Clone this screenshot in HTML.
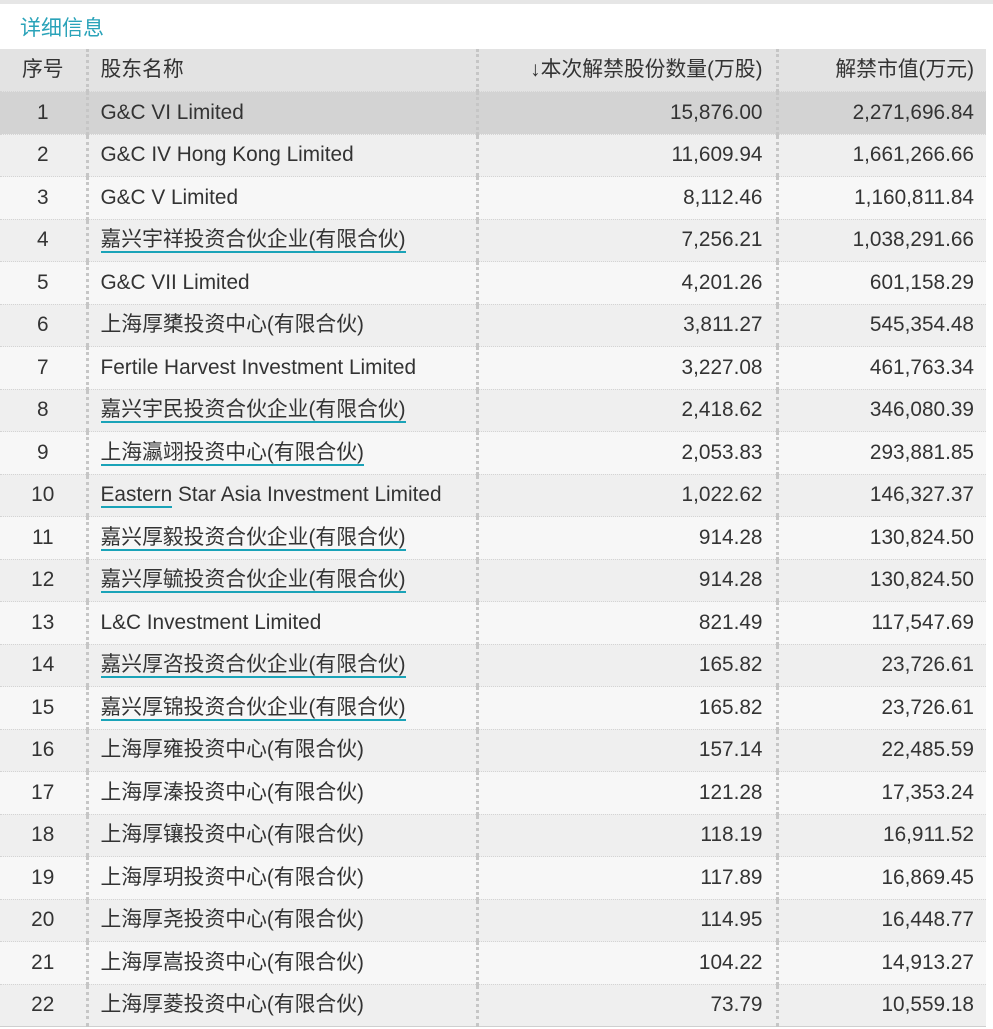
<!DOCTYPE html>
<html><head><meta charset="utf-8"><style>
body{margin:0;width:993px;height:1029px;background:#fff;font-family:"Liberation Sans","Noto Sans CJK SC",sans-serif;color:#333;overflow:hidden;position:relative}
.top{height:4px;background:#e6e6e6}
.title{position:absolute;left:20px;top:15px;font-size:21px;color:#2aa3b9;line-height:28px}
table{position:absolute;left:0;top:49px;width:986px;border-collapse:collapse;font-size:20.8px;table-layout:fixed}
td,th{height:42.5px;padding:0;font-weight:normal;white-space:nowrap;line-height:24px;vertical-align:middle;box-sizing:border-box}
th{background:#e3e3e3}
tr td,tr th{border-bottom:1px dotted #d4d4d4}
tr:last-child td{border-bottom:1px solid #cfcfcf}
.c1{width:87px;text-align:center;border-right:3px dotted #c6c6c6}
.c2{width:390px;text-align:left;padding-left:12px;border-right:3px dotted #c6c6c6}
.c3{width:300px;text-align:right;padding-right:13px;border-right:3px dotted #c6c6c6}
.c4{text-align:right;padding-right:12px}
tbody tr:nth-child(odd) td{background:#f7f7f7}
tbody tr:nth-child(even) td{background:#efefef}
tbody tr.sel td{background:#d3d3d3}
u{text-decoration:none;border-bottom:2px solid #1aa3b8;padding-bottom:0}
</style></head><body>
<div class="top"></div>
<div class="title">详细信息</div>
<table>
<thead><tr><th class="c1">序号</th><th class="c2">股东名称</th><th class="c3">↓本次解禁股份数量(万股)</th><th class="c4">解禁市值(万元)</th></tr></thead>
<tbody>
<tr class="sel"><td class="c1">1</td><td class="c2">G&amp;C VI Limited</td><td class="c3">15,876.00</td><td class="c4">2,271,696.84</td></tr>
<tr><td class="c1">2</td><td class="c2">G&amp;C IV Hong Kong Limited</td><td class="c3">11,609.94</td><td class="c4">1,661,266.66</td></tr>
<tr><td class="c1">3</td><td class="c2">G&amp;C V Limited</td><td class="c3">8,112.46</td><td class="c4">1,160,811.84</td></tr>
<tr><td class="c1">4</td><td class="c2"><u>嘉兴宇祥投资合伙企业(有限合伙)</u></td><td class="c3">7,256.21</td><td class="c4">1,038,291.66</td></tr>
<tr><td class="c1">5</td><td class="c2">G&amp;C VII Limited</td><td class="c3">4,201.26</td><td class="c4">601,158.29</td></tr>
<tr><td class="c1">6</td><td class="c2">上海厚橥投资中心(有限合伙)</td><td class="c3">3,811.27</td><td class="c4">545,354.48</td></tr>
<tr><td class="c1">7</td><td class="c2">Fertile Harvest Investment Limited</td><td class="c3">3,227.08</td><td class="c4">461,763.34</td></tr>
<tr><td class="c1">8</td><td class="c2"><u>嘉兴宇民投资合伙企业(有限合伙)</u></td><td class="c3">2,418.62</td><td class="c4">346,080.39</td></tr>
<tr><td class="c1">9</td><td class="c2"><u>上海瀛翊投资中心(有限合伙)</u></td><td class="c3">2,053.83</td><td class="c4">293,881.85</td></tr>
<tr><td class="c1">10</td><td class="c2"><u>Eastern</u> Star Asia Investment Limited</td><td class="c3">1,022.62</td><td class="c4">146,327.37</td></tr>
<tr><td class="c1">11</td><td class="c2"><u>嘉兴厚毅投资合伙企业(有限合伙)</u></td><td class="c3">914.28</td><td class="c4">130,824.50</td></tr>
<tr><td class="c1">12</td><td class="c2"><u>嘉兴厚毓投资合伙企业(有限合伙)</u></td><td class="c3">914.28</td><td class="c4">130,824.50</td></tr>
<tr><td class="c1">13</td><td class="c2">L&amp;C Investment Limited</td><td class="c3">821.49</td><td class="c4">117,547.69</td></tr>
<tr><td class="c1">14</td><td class="c2"><u>嘉兴厚咨投资合伙企业(有限合伙)</u></td><td class="c3">165.82</td><td class="c4">23,726.61</td></tr>
<tr><td class="c1">15</td><td class="c2"><u>嘉兴厚锦投资合伙企业(有限合伙)</u></td><td class="c3">165.82</td><td class="c4">23,726.61</td></tr>
<tr><td class="c1">16</td><td class="c2">上海厚雍投资中心(有限合伙)</td><td class="c3">157.14</td><td class="c4">22,485.59</td></tr>
<tr><td class="c1">17</td><td class="c2">上海厚溱投资中心(有限合伙)</td><td class="c3">121.28</td><td class="c4">17,353.24</td></tr>
<tr><td class="c1">18</td><td class="c2">上海厚镶投资中心(有限合伙)</td><td class="c3">118.19</td><td class="c4">16,911.52</td></tr>
<tr><td class="c1">19</td><td class="c2">上海厚玥投资中心(有限合伙)</td><td class="c3">117.89</td><td class="c4">16,869.45</td></tr>
<tr><td class="c1">20</td><td class="c2">上海厚尧投资中心(有限合伙)</td><td class="c3">114.95</td><td class="c4">16,448.77</td></tr>
<tr><td class="c1">21</td><td class="c2">上海厚嵩投资中心(有限合伙)</td><td class="c3">104.22</td><td class="c4">14,913.27</td></tr>
<tr><td class="c1">22</td><td class="c2">上海厚菱投资中心(有限合伙)</td><td class="c3">73.79</td><td class="c4">10,559.18</td></tr>
</tbody></table>
</body></html>
